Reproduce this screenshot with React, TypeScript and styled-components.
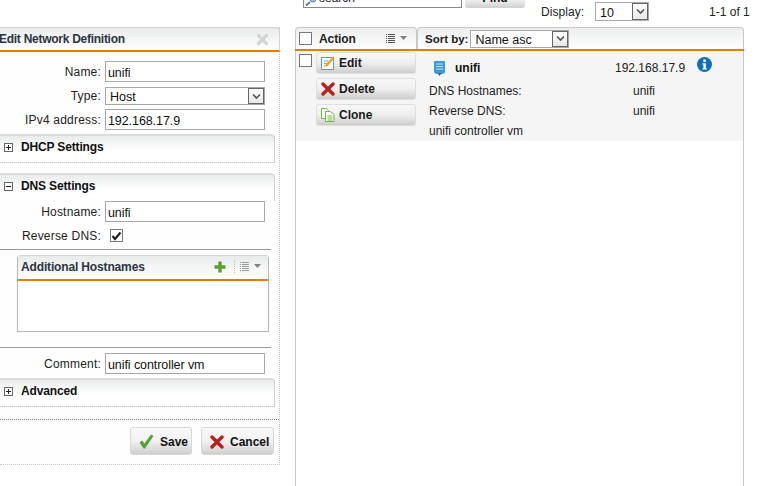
import React from "react";
import styled, { createGlobalStyle } from "styled-components";

const Global = createGlobalStyle`
  html, body { margin: 0; padding: 0; background: #fff; }
  body { font-family: "Liberation Sans", Arial, sans-serif; font-size: 12px; color: #111; overflow: hidden; }
`;

const Page = styled.div`
  display: flex;
  width: 758px;
  height: 486px;
  overflow: hidden;
`;

const Panel = styled.section`
  width: 280px;
  height: 438px;
  margin-top: 27px;
  box-sizing: border-box;
  border-right: 1px dotted #c4c4c4;
  border-bottom: 1px dotted #c4c4c4;
  background: #fefefe;
  flex: none;
`;

const PanelHeader = styled.header`
  height: 25px;
  box-sizing: border-box;
  margin-right: -1px;
  border-top: 1px solid #d4d4d4;
  border-right: 1px solid #d4d4d4;
  border-top-right-radius: 4px;
  border-bottom: 2px solid #e97c00;
  background: linear-gradient(#e9ebeb, #fff);
  display: flex;
  align-items: center;
  justify-content: space-between;
  padding-right: 10px;
  font-weight: bold;
  color: #2b3440;
  h1 { font-size: 12px; margin: 0 0 0 -1px; letter-spacing: -0.27px; }
`;

const Body = styled.div`
  padding-top: 9px;
`;

const Field = styled.div<{ $top?: number; $h?: number }>`
  display: flex;
  align-items: center;
  height: ${(p) => p.$h ?? 21}px;
  margin-top: ${(p) => p.$top ?? 0}px;
`;

const Label = styled.label`
  width: 101px;
  text-align: right;
  margin-right: 4px;
  letter-spacing: 0.2px;
  color: #222;
  flex: none;
`;

const Input = styled.div`
  width: 160px;
  height: 21px;
  box-sizing: border-box;
  border: 1px solid #a8a8a8;
  background: #fff;
  padding: 3px 2px 0 2px;
  line-height: 16px;
  font-size: 12.5px;
  letter-spacing: -0.08px;
  color: #111;
`;

const SelectBox = styled.div<{ $w: number; $h: number; $top?: number }>`
  width: ${(p) => p.$w}px;
  height: ${(p) => p.$h}px;
  margin-top: ${(p) => p.$top ?? 0}px;
  box-sizing: border-box;
  border: 1px solid #a8a8a8;
  background: #fff;
  display: flex;
  align-items: center;
  justify-content: space-between;
  padding-left: 4px;
  font-size: 12.5px;
  font-weight: normal;
  color: #111;
  flex: none;
`;

const SelectText = styled.span`
  margin-top: 2px;
`;

const Arrow = styled.span`
  width: 16px;
  height: 100%;
  box-sizing: border-box;
  border: 1px solid #666;
  background: linear-gradient(#fff, #e8e8e8);
  display: flex;
  align-items: center;
  justify-content: center;
  flex: none;
`;

const Chevron = () => (
  <svg width="9" height="7" viewBox="0 0 9 7">
    <path d="M1 1.500 L4.500 5 L8 1.500" fill="none" stroke="#555" strokeWidth="1.6" />
  </svg>
);

const Section = styled.div<{ $top: number; $dotted?: boolean }>`
  width: 275px;
  height: ${(p) => (p.$dotted ? 29 : 28)}px;
  margin-top: ${(p) => p.$top}px;
  box-sizing: border-box;
  border-top: 2px solid #dcdcdc;
  border-right: 1px solid #cfcfcf;
  border-top-right-radius: 4px;
  border-bottom: ${(p) => (p.$dotted ? "1px dotted #c4c4c4" : "0")};
  background: linear-gradient(#e9ebeb, #fff 14px);
  display: flex;
  align-items: flex-start;
  padding: 4px 0 0 4px;
  font-weight: bold;
  letter-spacing: -0.15px;
  color: #111;
`;

const Collapse = styled.span`
  width: 9px;
  height: 9px;
  box-sizing: border-box;
  border: 1px solid #666;
  background: #fff;
  margin: 3px 8px 0 0;
  position: relative;
  flex: none;
  &::before {
    content: "";
    position: absolute;
    left: 1px;
    right: 1px;
    top: 3px;
    height: 1px;
    background: #222;
  }
`;

const Expand = styled(Collapse)`
  &::after {
    content: "";
    position: absolute;
    top: 1px;
    bottom: 1px;
    left: 3px;
    width: 1px;
    background: #222;
  }
`;

const CheckRow = styled.div`
  display: flex;
  align-items: center;
  height: 13px;
  margin-top: 7px;
`;

const Check = styled.span<{ $ml?: number }>`
  width: 13px;
  height: 13px;
  box-sizing: border-box;
  border: 1px solid #777;
  background: #fff;
  margin-left: ${(p) => p.$ml ?? 0}px;
  display: flex;
  align-items: center;
  justify-content: center;
  flex: none;
`;

const Rule = styled.hr<{ $top: number }>`
  width: 271px;
  height: 1px;
  border: 0;
  margin: ${(p) => p.$top}px 0 0;
  background: #9a9a9a;
`;

const SubBox = styled.div`
  width: 252px;
  height: 77px;
  margin: 5px 0 0 17px;
  box-sizing: border-box;
  border: 1px solid #b4b4b4;
  border-top-color: #d4d4d4;
  border-top-left-radius: 4px;
  border-top-right-radius: 4px;
  background: #fff;
`;

const SubHeader = styled.div`
  height: 25px;
  box-sizing: border-box;
  border-bottom: 2px solid #e97c00;
  background: linear-gradient(#e9ebeb, #fff);
  display: flex;
  align-items: center;
  padding: 0 7px 2px 3px;
  font-weight: bold;
  color: #2b3440;
  span { flex: 1; letter-spacing: -0.15px; }
`;

const ToolSep = styled.i`
  width: 0;
  height: 13px;
  border-left: 1px dotted #bbb;
  margin: 0 5px 0 8px;
`;

const DottedLine = styled.div`
  margin-top: 12px;
  border-top: 1px dotted #777;
`;

const Actions = styled.div`
  display: flex;
  justify-content: flex-end;
  gap: 9px;
  margin: 7px 5px 0 0;
`;

const Button = styled.button<{ $w: number }>`
  width: ${(p) => p.$w}px;
  height: 28px;
  padding: 1px 0 0 8px;
  border: 1px solid #d8d8d8;
  border-radius: 3px;
  background: linear-gradient(#fafafa, #f1f1f1 50%, #cfcfcf);
  display: flex;
  align-items: center;
  justify-content: flex-start;
  gap: 6px;
  font: bold 12px "Liberation Sans", Arial, sans-serif;
  color: #111;
`;

const Right = styled.main`
  width: 449px;
  margin-left: 15px;
  flex: none;
`;

const TopBar = styled.div`
  height: 27px;
  margin-right: -6px;
  display: flex;
  align-items: flex-start;
`;

const SearchBox = styled.div`
  width: 159px;
  height: 8px;
  margin: 0 3px 0 8px;
  box-sizing: border-box;
  border: 1px solid #888;
  border-top: 0;
  overflow: hidden;
  display: flex;
  align-items: flex-start;
  gap: 2px;
  padding-left: 1px;
  color: #222;
  flex: none;
`;

const SearchText = styled.span`
  line-height: 12px;
  margin-top: -8px;
`;

const FindButton = styled.div`
  width: 60px;
  height: 8px;
  overflow: hidden;
  border-radius: 0 0 3px 3px;
  background: linear-gradient(#f0f0f0, #cfcfcf);
  font-weight: bold;
  text-align: center;
  flex: none;
  span { display: block; line-height: 12px; margin-top: -8px; }
`;

const DisplayLabel = styled.span`
  margin: 5px 11px 0 16px;
  letter-spacing: 0.05px;
  color: #222;
  flex: none;
`;

const Count = styled.span`
  margin: 5px 0 0 60px;
  color: #222;
  flex: none;
`;

const ListHead = styled.div`
  height: 24px;
  box-sizing: border-box;
  border-bottom: 2px solid #e97c00;
  display: flex;
`;

const ActionCell = styled.div`
  width: 122px;
  box-sizing: border-box;
  border: 1px solid #c8c8c8;
  border-bottom: 0;
  border-top-left-radius: 4px;
  border-top-right-radius: 4px;
  background: linear-gradient(#eceded, #fff);
  display: flex;
  align-items: center;
  padding: 0 9px 0 3px;
  font-weight: bold;
  color: #222;
  b { margin-left: 7px; flex: 1; letter-spacing: -0.1px; }
`;

const SortCell = styled.div`
  flex: 1;
  box-sizing: border-box;
  border-top: 1px solid #c8c8c8;
  border-left: 1px solid #c8c8c8;
  border-right: 1px solid #c8c8c8;
  border-top-right-radius: 4px;
  border-top-left-radius: 4px;
  background: linear-gradient(#eceded, #fff);
  display: flex;
  align-items: center;
  padding-left: 7px;
  font-weight: bold;
  font-size: 11.5px;
  color: #222;
  > span:first-child { margin-right: 2px; }
`;

const ListBody = styled.div`
  height: 437px;
  box-sizing: border-box;
  border-left: 1px solid #c8c8c8;
  border-right: 1px solid #c8c8c8;
`;

const Row = styled.div`
  height: 90px;
  background: #f5f5f5;
  display: flex;
`;

const RowCheck = styled.div`
  width: 20px;
  padding: 3px 0 0 3px;
  box-sizing: border-box;
  flex: none;
`;

const ButtonStack = styled.div`
  width: 100px;
  padding-top: 1px;
  display: flex;
  flex-direction: column;
  gap: 4px;
  flex: none;
`;

const RowButton = styled.button`
  height: 22px;
  padding: 0 0 0 4px;
  border: 1px solid #dedede;
  border-radius: 3px;
  background: linear-gradient(#f8f8f8, #efefef 50%, #cdcdcd);
  display: flex;
  align-items: center;
  gap: 4px;
  font: bold 12px "Liberation Sans", Arial, sans-serif;
  color: #1a1a1a;
`;

const Details = styled.div`
  flex: 1;
  padding: 7px 0 0 13px;
  color: #222;
  line-height: 20px;
`;

const NameRow = styled.div`
  display: grid;
  grid-template-columns: 186px 82px 20px;
  height: 23px;
  align-items: start;
  svg.info { margin-top: -1px; }
`;

const HostName = styled.span`
  display: flex;
  align-items: center;
  gap: 10px;
  padding-left: 5px;
  font-weight: bold;
  color: #111;
`;

const DetailRow = styled.div`
  display: grid;
  grid-template-columns: 204px 1fr;
  height: 20px;
`;

const Comment = styled.div`
  height: 20px;
`;

const MenuIcon = ({ c = "#555" }: { c?: string }) => (
  <svg width="21" height="9" viewBox="0 0 21 9">
    <path
      d="M0 .5h1M2 .5h7M0 2.500h1M2 2.500h7M0 4.500h1M2 4.500h7M0 6.500h1M2 6.500h7M0 8.500h1M2 8.500h7"
      stroke={c}
      strokeWidth="1"
    />
    <path d="M14 2h7l-3.500 4z" fill="#808080" />
  </svg>
);

const CrossIcon = ({ s = 14 }: { s?: number }) => (
  <svg width={s} height={s} viewBox="0 0 14 14">
    <path d="M2 2 L12 12 M12 2 L2 12" stroke="#b8201c" strokeWidth="3.4" strokeLinecap="round" />
  </svg>
);

const CheckMark = () => (
  <svg width="11" height="10" viewBox="0 0 11 10">
    <path d="M1.500 5 L4 8 L9.500 1.500" fill="none" stroke="#222" strokeWidth="2.2" />
  </svg>
);

export default function App() {
  return (
    <Page>
      <Global />
      <Panel>
        <PanelHeader>
          <h1>Edit Network Definition</h1>
          <svg width="13" height="13" viewBox="0 0 13 13">
            <path d="M1.500 1.500 L11.500 11.500 M11.500 1.500 L1.500 11.500" stroke="#d3d6d3" strokeWidth="3.2" />
          </svg>
        </PanelHeader>
        <Body>
          <Field>
            <Label>Name:</Label>
            <Input>unifi</Input>
          </Field>
          <Field $top={5} $h={18}>
            <Label>Type:</Label>
            <SelectBox $w={160} $h={18}>
              <SelectText>Host</SelectText>
              <Arrow>
                <Chevron />
              </Arrow>
            </SelectBox>
          </Field>
          <Field $top={4}>
            <Label>IPv4 address:</Label>
            <Input>192.168.17.9</Input>
          </Field>
          <Section $top={4} $dotted>
            <Expand />
            DHCP Settings
          </Section>
          <Section $top={10}>
            <Collapse />
            DNS Settings
          </Section>
          <Field>
            <Label>Hostname:</Label>
            <Input>unifi</Input>
          </Field>
          <CheckRow>
            <Label>Reverse DNS:</Label>
            <Check $ml={5}>
              <CheckMark />
            </Check>
          </CheckRow>
          <Rule $top={7} />
          <SubBox>
            <SubHeader>
              <span>Additional Hostnames</span>
              <svg width="12" height="12" viewBox="0 0 12 12">
                <path d="M6 0.500v11M0.500 6h11" stroke="#5aa02c" strokeWidth="3.4" />
              </svg>
              <ToolSep />
              <MenuIcon c="#999" />
            </SubHeader>
          </SubBox>
          <Rule $top={15} />
          <Field $top={5}>
            <Label>Comment:</Label>
            <Input>unifi controller vm</Input>
          </Field>
          <Section $top={4} $dotted>
            <Expand />
            Advanced
          </Section>
          <DottedLine />
          <Actions>
            <Button $w={62}>
              <svg width="15" height="15" viewBox="0 0 15 15">
                <path d="M0.500 8.500 L3 6.500 L5.500 9.500 L12 0.500 L14.500 2 L6 14.500 L4.500 14.500z" fill="#57a13a" />
              </svg>
              Save
            </Button>
            <Button $w={73}>
              <CrossIcon />
              Cancel
            </Button>
          </Actions>
        </Body>
      </Panel>
      <Right>
        <TopBar>
          <SearchBox>
            <svg width="12" height="6" viewBox="0 0 12 6">
              <circle cx="8" cy="-1" r="3" fill="#9cc3e6" stroke="#5c7f9f" />
              <path d="M5 2 L1 5.500" stroke="#4f7da6" strokeWidth="2" />
            </svg>
            <SearchText>search</SearchText>
          </SearchBox>
          <FindButton>
            <span>Find</span>
          </FindButton>
          <DisplayLabel>Display:</DisplayLabel>
          <SelectBox $w={54} $h={19} $top={2}>
            <SelectText>10</SelectText>
            <Arrow>
              <Chevron />
            </Arrow>
          </SelectBox>
          <Count>1-1 of 1</Count>
        </TopBar>
        <ListHead>
          <ActionCell>
            <Check />
            <b>Action</b>
            <MenuIcon />
          </ActionCell>
          <SortCell>
            <span>Sort by:</span>
            <SelectBox $w={99} $h={18}>
              <SelectText>Name asc</SelectText>
              <Arrow>
                <Chevron />
              </Arrow>
            </SelectBox>
          </SortCell>
        </ListHead>
        <ListBody>
          <Row>
            <RowCheck>
              <Check />
            </RowCheck>
            <ButtonStack>
              <RowButton>
                <svg width="14" height="14" viewBox="0 0 14 14">
                  <rect x=".5" y="1.500" width="12" height="12" fill="#fff" stroke="#4aa3dc" />
                  <path d="M3 5h4M3 7.500h3M3 10h2" stroke="#999" />
                  <path d="M5 10 L12.500 1.500" stroke="#f0a41e" strokeWidth="2.6" />
                </svg>
                Edit
              </RowButton>
              <RowButton>
                <CrossIcon />
                Delete
              </RowButton>
              <RowButton>
                <svg width="14" height="14" viewBox="0 0 14 14">
                  <path d="M.5 .5h5l2 2v8H.5z" fill="#fff" stroke="#6dbb3c" />
                  <path d="M4.500 3.500h5l3.500 3v7H4.500z" fill="#fff" stroke="#6dbb3c" />
                  <path d="M6.500 8h5M6.500 10h5M6.500 12h5" stroke="#6dbb3c" />
                </svg>
                Clone
              </RowButton>
            </ButtonStack>
            <Details>
              <NameRow>
                <HostName>
                  <svg width="11" height="15" viewBox="0 0 11 15">
                    <rect x="0" y="0" width="11" height="12" rx="1" fill="#3d9ad6" />
                    <path d="M2 3h7M2 5.500h7M2 8h7" stroke="#bfe2f7" />
                    <path d="M0 12h11L7 13l-1.500 2L4 13z" fill="#1f6fa8" />
                  </svg>
                  unifi
                </HostName>
                <span>192.168.17.9</span>
                <svg className="info" width="15" height="15" viewBox="0 0 15 15">
                  <circle cx="7.500" cy="7.500" r="7.500" fill="#0f6fb8" />
                  <rect x="6.300" y="2.500" width="2.600" height="2.400" fill="#fff" />
                  <path d="M5.500 6.200h3.400v5.200h1.100v1.200H5.300v-1.200h1.100V7.400h-.9z" fill="#fff" />
                </svg>
              </NameRow>
              <DetailRow>
                <span>DNS Hostnames:</span>
                <span>unifi</span>
              </DetailRow>
              <DetailRow>
                <span>Reverse DNS:</span>
                <span>unifi</span>
              </DetailRow>
              <Comment>unifi controller vm</Comment>
            </Details>
          </Row>
        </ListBody>
      </Right>
    </Page>
  );
}
